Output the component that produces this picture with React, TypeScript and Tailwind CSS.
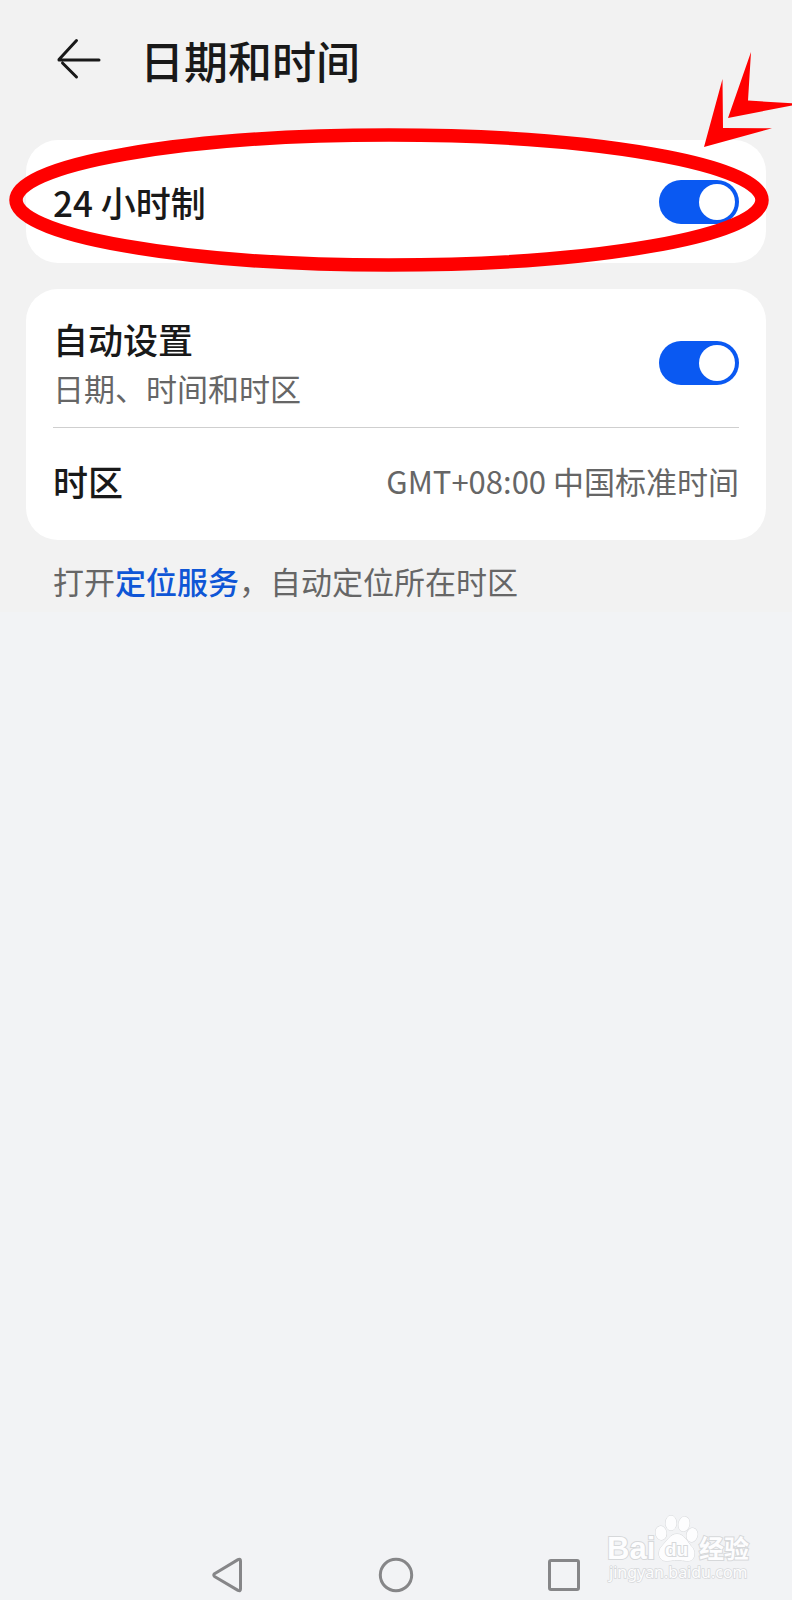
import { useState } from "react";

function Switch({ id, label }: { id: string; label: string }) {
  const [on, setOn] = useState(true);
  return (
    <span className="relative inline-flex h-11 w-20 shrink-0">
      <input
        id={id}
        type="checkbox"
        role="switch"
        aria-label={label}
        checked={on}
        onChange={(e) => setOn(e.target.checked)}
        className="peer h-11 w-20 cursor-pointer appearance-none rounded-full bg-gray-300 checked:bg-[#0a59f2]"
      />
      <span className="pointer-events-none absolute top-1 left-1 h-9 w-9 rounded-full bg-white peer-checked:right-1 peer-checked:left-auto" />
    </span>
  );
}

function Ring() {
  return (
    <svg
      aria-hidden="true"
      className="pointer-events-none absolute -top-[5px] -left-[10px] h-[calc(100%+7px)] w-[calc(100%+6px)] overflow-visible"
    >
      <ellipse cx="50%" cy="50%" rx="50%" ry="50%" fill="none" stroke="#ff0000" strokeWidth="13.5" />
    </svg>
  );
}

function Pointer() {
  return (
    <svg
      aria-hidden="true"
      viewBox="0 0 92 100"
      className="pointer-events-none absolute -top-[90px] -right-[28px] h-[100px] w-[92px]"
      fill="#ff0000"
    >
      <path d="M20.5 29 L21 78 L70 78.3 L2 97 Z" />
      <path d="M49 2 L46 50.5 L92 53.5 L92 55 L26 68 Z" />
    </svg>
  );
}

function Watermark() {
  return (
    <svg
      aria-label="Baidu"
      viewBox="0 0 156 76"
      className="pointer-events-none absolute right-8 bottom-3 h-[76px] w-[156px]"
      fill="#fdfdfe"
      stroke="#d6d8da"
      strokeWidth="1"
      paintOrder="stroke"
    >
      <g fontFamily="'Liberation Sans', 'Noto Sans CJK SC', sans-serif" fontWeight="700">
        <text x="3" y="47" fontSize="31" strokeWidth="2">Bai</text>
        <ellipse cx="57" cy="21" rx="5.5" ry="7" transform="rotate(-12 57 21)" />
        <ellipse cx="67" cy="11" rx="5.5" ry="7.5" />
        <ellipse cx="80" cy="12" rx="5.5" ry="7.5" transform="rotate(12 80 12)" />
        <ellipse cx="88" cy="23" rx="5.5" ry="7" transform="rotate(14 88 23)" />
        <path d="M73 22 C66 22 63 29 58 34 C53 39 54 49 62 49 C67 49 69 48 73 48 C77 48 79 49 84 49 C92 49 92 38 87 34 C83 29 80 22 73 22 Z" />
        <text x="61" y="44" fontSize="19" fill="#fdfdfe" strokeWidth="2">du</text>
        <text x="95" y="46" fontSize="25" strokeWidth="2">经验</text>
      </g>
      <text x="5" y="66" fontSize="16" fontFamily="'Noto Sans', sans-serif" strokeWidth="1.5">
        jingyan.baidu.com
      </text>
    </svg>
  );
}

export default function App() {
  return (
    <div
      lang="zh-CN"
      className="relative flex min-h-screen flex-col overflow-hidden bg-[#f2f3f5] font-['Noto_Sans_CJK_SC',sans-serif] text-[#191919]"
    >
      <div className="bg-[#f2f2f2] px-[26px] pt-[30px] pb-2">
        <header className="flex items-center gap-[38px] pl-[30px]">
          <button type="button" aria-label="返回">
            <svg viewBox="0 0 46 44" className="h-11 w-[46px]" fill="none" stroke="currentColor" strokeWidth="3" strokeLinecap="round">
              <path d="M20.500 2.500 L3 21.500 M6.500 25 L20.500 39 M3 22 H43" />
            </svg>
          </button>
          <h1 className="text-[44px] leading-[60px] font-medium">日期和时间</h1>
        </header>

        <main className="mt-[50px]">
          <section className="relative flex h-[123px] items-center justify-between rounded-[32px] bg-white px-[27px]">
            <label htmlFor="hour24" className="text-[35px] leading-[48px] font-medium">
              24 小时制
            </label>
            <Switch id="hour24" label="24 小时制" />
            <Ring />
            <Pointer />
          </section>

          <section className="mt-[26px] rounded-[32px] bg-white px-[27px]">
            <div className="flex items-center justify-between border-b border-[#cfcfcf] pt-[26px] pb-4">
              <div className="flex flex-col gap-[2px]">
                <label htmlFor="auto" className="text-[35px] leading-[48px] font-medium">
                  自动设置
                </label>
                <p className="text-[31px] leading-[46px] text-[#666666]">日期、时间和时区</p>
              </div>
              <Switch id="auto" label="自动设置" />
            </div>
            <div className="flex h-28 items-center justify-between pb-[6px]">
              <span className="text-[35px] leading-[48px] font-medium">时区</span>
              <span className="text-[31px] leading-[46px] text-[#666666]">GMT+08:00 中国标准时间</span>
            </div>
          </section>

          <p className="mt-[18px] px-[27px] text-[31px] leading-[46px] text-[#666666]">
            打开
            <a href="#location" className="font-medium text-[#0f56d6]">
              定位服务
            </a>
            ，自动定位所在时区
          </p>
        </main>
      </div>

      <nav className="mt-auto flex items-center justify-center gap-[120px] pb-[5px]">
        <button type="button" aria-label="后退" className="flex w-12 justify-center">
          <svg viewBox="0 0 40 40" className="h-10 w-10" fill="none" stroke="#868688" strokeWidth="3" strokeLinejoin="round">
            <path d="M30 4.600 Q32.500 3.500 32.500 6 V34 Q32.500 36.500 30 35.400 L6.500 21.500 Q5 20 6.500 18.700 Z" />
          </svg>
        </button>
        <button type="button" aria-label="主屏幕" className="flex w-12 justify-center">
          <svg viewBox="0 0 40 40" className="h-10 w-10" fill="none" stroke="#868688" strokeWidth="3">
            <circle cx="20" cy="20" r="15.700" />
          </svg>
        </button>
        <button type="button" aria-label="最近任务" className="flex w-12 justify-center">
          <svg viewBox="0 0 40 40" className="h-10 w-10" fill="none" stroke="#868688" strokeWidth="3">
            <rect x="5.500" y="5.500" width="29" height="29" rx="1.500" />
          </svg>
        </button>
      </nav>
      <Watermark />
    </div>
  );
}
